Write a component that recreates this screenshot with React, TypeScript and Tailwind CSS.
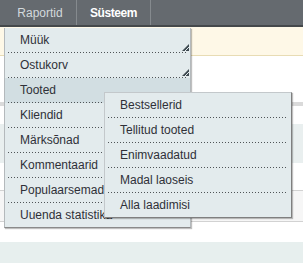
import type { ReactNode } from "react";

type MenuItem = { label: string; arrow?: boolean; active?: boolean };

const mainItems: MenuItem[] = [
  { label: "Müük", arrow: true },
  { label: "Ostukorv", arrow: true },
  { label: "Tooted", active: true },
  { label: "Kliendid" },
  { label: "Märksõnad" },
  { label: "Kommentaarid" },
  { label: "Populaarsemad" },
  { label: "Uuenda statistika" },
];

const subItems: MenuItem[] = [
  { label: "Bestsellerid" },
  { label: "Tellitud tooted" },
  { label: "Enimvaadatud" },
  { label: "Madal laoseis" },
  { label: "Alla laadimisi" },
];

function Dots() {
  return (
    <div className="mx-[3px] h-px bg-[linear-gradient(to_right,#4f5457_1px,transparent_1px)] bg-[length:3px_1px]" />
  );
}

function Corner() {
  return (
    <svg width="7" height="7" viewBox="0 0 7 7" className="absolute right-[1px] bottom-[1px]">
      <polygon points="7,0 7,7 0,7" fill="#3f4a51" />
      <line x1="2.5" y1="7.5" x2="7.5" y2="2.5" stroke="#e3ebed" strokeWidth="1" />
    </svg>
  );
}

function Row({ item, last }: { item: MenuItem; last: boolean }) {
  return (
    <div className={item.active ? "bg-[#d2dee2]" : ""}>
      <div className="relative flex h-[24px] items-center whitespace-nowrap pl-[15px] text-[#2f3038]">
        {item.label}
        {item.arrow && <Corner />}
      </div>
      {!last && <Dots />}
    </div>
  );
}

function Menu({ items, className }: { items: MenuItem[]; className: string }): ReactNode {
  return (
    <div className={`absolute overflow-hidden bg-[#e3ebed] ${className}`}>
      {items.map((item, i) => (
        <Row key={item.label} item={item} last={i === items.length - 1} />
      ))}
    </div>
  );
}

export default function App() {
  return (
    <div className="relative h-[263px] w-[303px] overflow-hidden bg-white font-['Liberation_Sans',Arial,sans-serif] text-[12px]">
      <header className="flex h-[27px] border-b-2 border-[#44484b] bg-[#656a6f] pl-[4px]">
        <div className="flex w-[73px] items-center justify-center border-r border-[#858a8e] pt-px text-[#d3d9dc]">
          Raportid
        </div>
        <div className="flex w-[74px] items-center justify-center border-r border-[#858a8e] pt-px font-bold tracking-[-0.4px] text-white">
          Süsteem
        </div>
      </header>

      <div className="h-[29px] border-b border-[#e8dcb4] bg-[#fef8e7]" />
      <div className="h-[46px]" />
      <div className="h-[4px] bg-[#dadada]" />
      <div className="h-[18px]" />
      <div className="h-[39px] bg-[#e9efef]" />
      <div className="h-[27px]" />
      <div className="h-[32px] border-y border-[#d2d2d2] bg-[#f6f6f6]" />
      <div className="h-[20px]" />
      <div className="h-[22px] bg-[#e7efee]" />

      <Menu
        items={mainItems}
        className="top-[28px] left-[4px] w-[187px] border-x border-b border-x-[#b4b9bc] border-b-[#8a8a8a] shadow-[1px_1px_1px_rgba(0,0,0,0.25)]"
      />
      <Menu
        items={subItems}
        className="top-[92px] left-[104px] w-[188px] border border-[#c3c8cb] border-r-[#7f7f7f] border-b-[#7f7f7f] shadow-[1px_1px_1px_rgba(0,0,0,0.25)]"
      />
    </div>
  );
}
